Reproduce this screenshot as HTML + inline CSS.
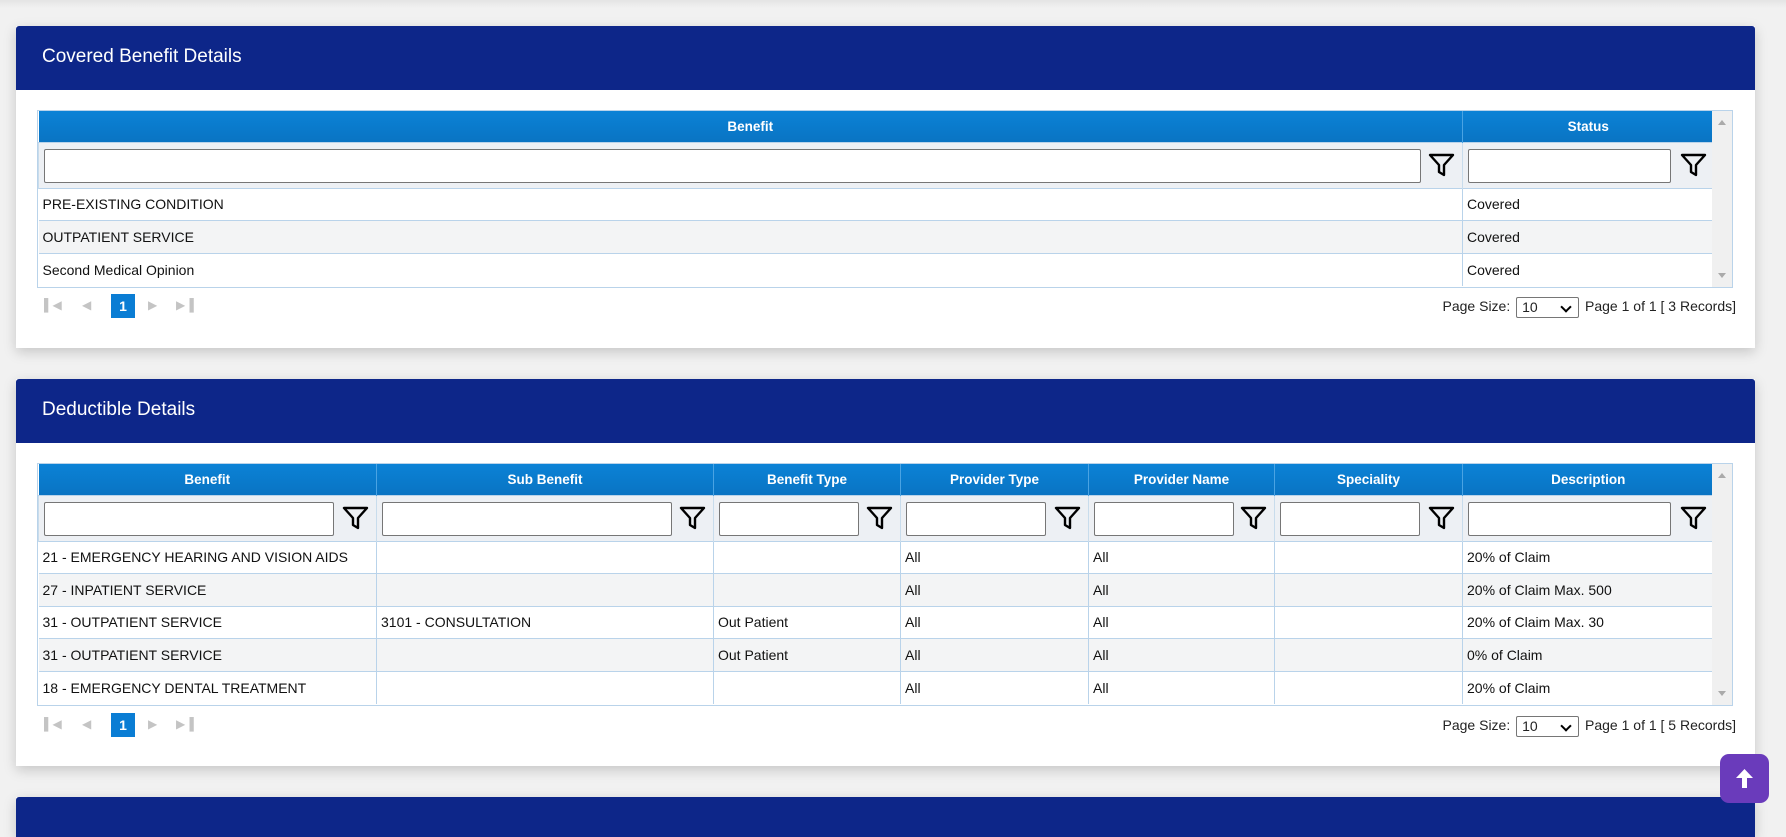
<!DOCTYPE html>
<html><head><meta charset="utf-8"><style>
*{box-sizing:border-box;margin:0;padding:0}
body{width:1786px;height:816px;background:#f1f1f1;font-family:"Liberation Sans",Arial,sans-serif;position:relative;overflow:hidden}
.topsh{position:absolute;left:0;top:0;width:1786px;height:8px;background:linear-gradient(#e4e4e4,#f1f1f1)}
.card{position:absolute;left:16px;width:1739px;background:#fff;box-shadow:0 4px 12px rgba(0,0,0,.18)}
.hd{position:absolute;left:0;top:0;width:100%;height:64px;background:#0d2689;color:#fff;font-size:19px;padding:20px 0 0 26px;border-radius:3px 3px 0 0}
.grid{position:absolute;left:21px;width:1696px;border:1px solid #b9d3ea;background:#fff}
table{border-collapse:collapse;table-layout:fixed;width:1675px}
th{height:31px;background:linear-gradient(#0b82d6,#0a74c3);color:#fff;font-size:13.5px;font-weight:bold;border-left:1px solid #4aa3e3;text-align:center}
tr.f td{height:46px;background:#edf0f4;border-left:1px solid #c8dcec;position:relative}
tr.f input{position:absolute;left:5px;top:6px;height:34px;border:1px solid #767676;border-radius:2px;background:#fff}
tr.f svg{position:absolute;right:7px;top:9px}
td{font-size:14px;color:#111;padding-left:4px;border-left:1px solid #b9d3ea;border-top:1px solid #b9d3ea;height:32.5px}
tr.alt td{background:#f3f4f5}
td:first-child,th:first-child{border-left:none}
.sb{position:absolute;right:0;top:0;width:20px;height:100%;background:#f0f0f0}
.sb:before{content:"";position:absolute;left:6px;top:9px;border:4px solid transparent;border-bottom:5px solid #aaa;border-top:none}
.sb:after{content:"";position:absolute;left:6px;bottom:9px;border:4px solid transparent;border-top:5px solid #aaa;border-bottom:none}
.pager{position:absolute;left:24px;height:24px;width:1696px;font-size:14px;color:#222}
.pb{position:absolute;top:4px;color:#c4c4c4;font-size:12px}
.p1{position:absolute;left:71px;top:0;width:24px;height:24px;background:#0a7dd4;color:#fff;font-weight:bold;text-align:center;line-height:24px;font-size:14px}
.ps{position:absolute;right:0;top:3px}
.sel{display:inline-block;width:63px;height:21px;border:1px solid #767676;border-radius:2px;vertical-align:middle;position:relative;padding-left:5px;line-height:19px;margin:0 2px;background:#fff}
.sel:after{content:"";position:absolute;right:8px;top:5px;width:6px;height:6px;border-right:2px solid #000;border-bottom:2px solid #000;transform:rotate(45deg)}
.up{position:absolute;left:1720px;top:754px;width:49px;height:49px;border-radius:9px;background:#6a3bbb}
</style></head><body>
<div class="topsh"></div>
<svg width="0" height="0" style="position:absolute"><defs><symbol id="fn" viewBox="0 0 27 26"><path d="M2 3H25L16 13V23L11 20V13Z" fill="none" stroke="#000" stroke-width="2.4" stroke-linejoin="round"/></symbol></defs></svg>

<div class="card" style="top:26px;height:322px">
<div class="hd">Covered Benefit Details</div>
<div class="grid" style="top:84px;height:178px">
<table><colgroup><col style="width:1424px"><col style="width:251px"></colgroup>
<tr><th>Benefit</th><th>Status</th></tr>
<tr class="f"><td><input style="width:1377px"><svg width="27" height="26"><use href="#fn"/></svg></td><td><input style="width:203px"><svg width="27" height="26"><use href="#fn"/></svg></td></tr>
<tr><td>PRE-EXISTING CONDITION</td><td>Covered</td></tr>
<tr class="alt"><td>OUTPATIENT SERVICE</td><td>Covered</td></tr>
<tr><td>Second Medical Opinion</td><td>Covered</td></tr>
</table><div class="sb"></div></div>
<div class="pager" style="top:268px">
<span class="pb" style="left:4px">&#9612;&#9664;</span><span class="pb" style="left:42px">&#9664;</span><div class="p1">1</div><span class="pb" style="left:108px">&#9654;</span><span class="pb" style="left:136px">&#9654;&#9616;</span>
<div class="ps">Page Size: <span class="sel">10</span> Page 1 of 1 [ 3 Records]</div></div>
</div>

<div class="card" style="top:379px;height:387px">
<div class="hd">Deductible Details</div>
<div class="grid" style="top:84px;height:243px">
<table><colgroup><col style="width:338px"><col style="width:337px"><col style="width:187px"><col style="width:188px"><col style="width:186px"><col style="width:188px"><col style="width:251px"></colgroup>
<tr><th>Benefit</th><th>Sub Benefit</th><th>Benefit Type</th><th>Provider Type</th><th>Provider Name</th><th>Speciality</th><th>Description</th></tr>
<tr class="f"><td><input style="width:290px"><svg width="27" height="26"><use href="#fn"/></svg></td><td><input style="width:290px"><svg width="27" height="26"><use href="#fn"/></svg></td><td><input style="width:140px"><svg width="27" height="26"><use href="#fn"/></svg></td><td><input style="width:140px"><svg width="27" height="26"><use href="#fn"/></svg></td><td><input style="width:140px"><svg width="27" height="26"><use href="#fn"/></svg></td><td><input style="width:140px"><svg width="27" height="26"><use href="#fn"/></svg></td><td><input style="width:203px"><svg width="27" height="26"><use href="#fn"/></svg></td></tr>
<tr><td>21 - EMERGENCY HEARING AND VISION AIDS</td><td></td><td></td><td>All</td><td>All</td><td></td><td>20% of Claim</td></tr>
<tr class="alt"><td>27 - INPATIENT SERVICE</td><td></td><td></td><td>All</td><td>All</td><td></td><td>20% of Claim Max. 500</td></tr>
<tr><td>31 - OUTPATIENT SERVICE</td><td>3101 - CONSULTATION</td><td>Out Patient</td><td>All</td><td>All</td><td></td><td>20% of Claim Max. 30</td></tr>
<tr class="alt"><td>31 - OUTPATIENT SERVICE</td><td></td><td>Out Patient</td><td>All</td><td>All</td><td></td><td>0% of Claim</td></tr>
<tr><td>18 - EMERGENCY DENTAL TREATMENT</td><td></td><td></td><td>All</td><td>All</td><td></td><td>20% of Claim</td></tr>
</table><div class="sb"></div></div>
<div class="pager" style="top:334px">
<span class="pb" style="left:4px">&#9612;&#9664;</span><span class="pb" style="left:42px">&#9664;</span><div class="p1">1</div><span class="pb" style="left:108px">&#9654;</span><span class="pb" style="left:136px">&#9654;&#9616;</span>
<div class="ps">Page Size: <span class="sel">10</span> Page 1 of 1 [ 5 Records]</div></div>
</div>

<div class="card" style="top:797px;height:40px"><div class="hd" style="height:40px"></div></div>
<div class="up"><svg width="49" height="49" viewBox="0 0 49 49"><path d="M24.5 15L16 24H22V34H27V24H33Z" fill="#fff"/></svg></div>
</body></html>
